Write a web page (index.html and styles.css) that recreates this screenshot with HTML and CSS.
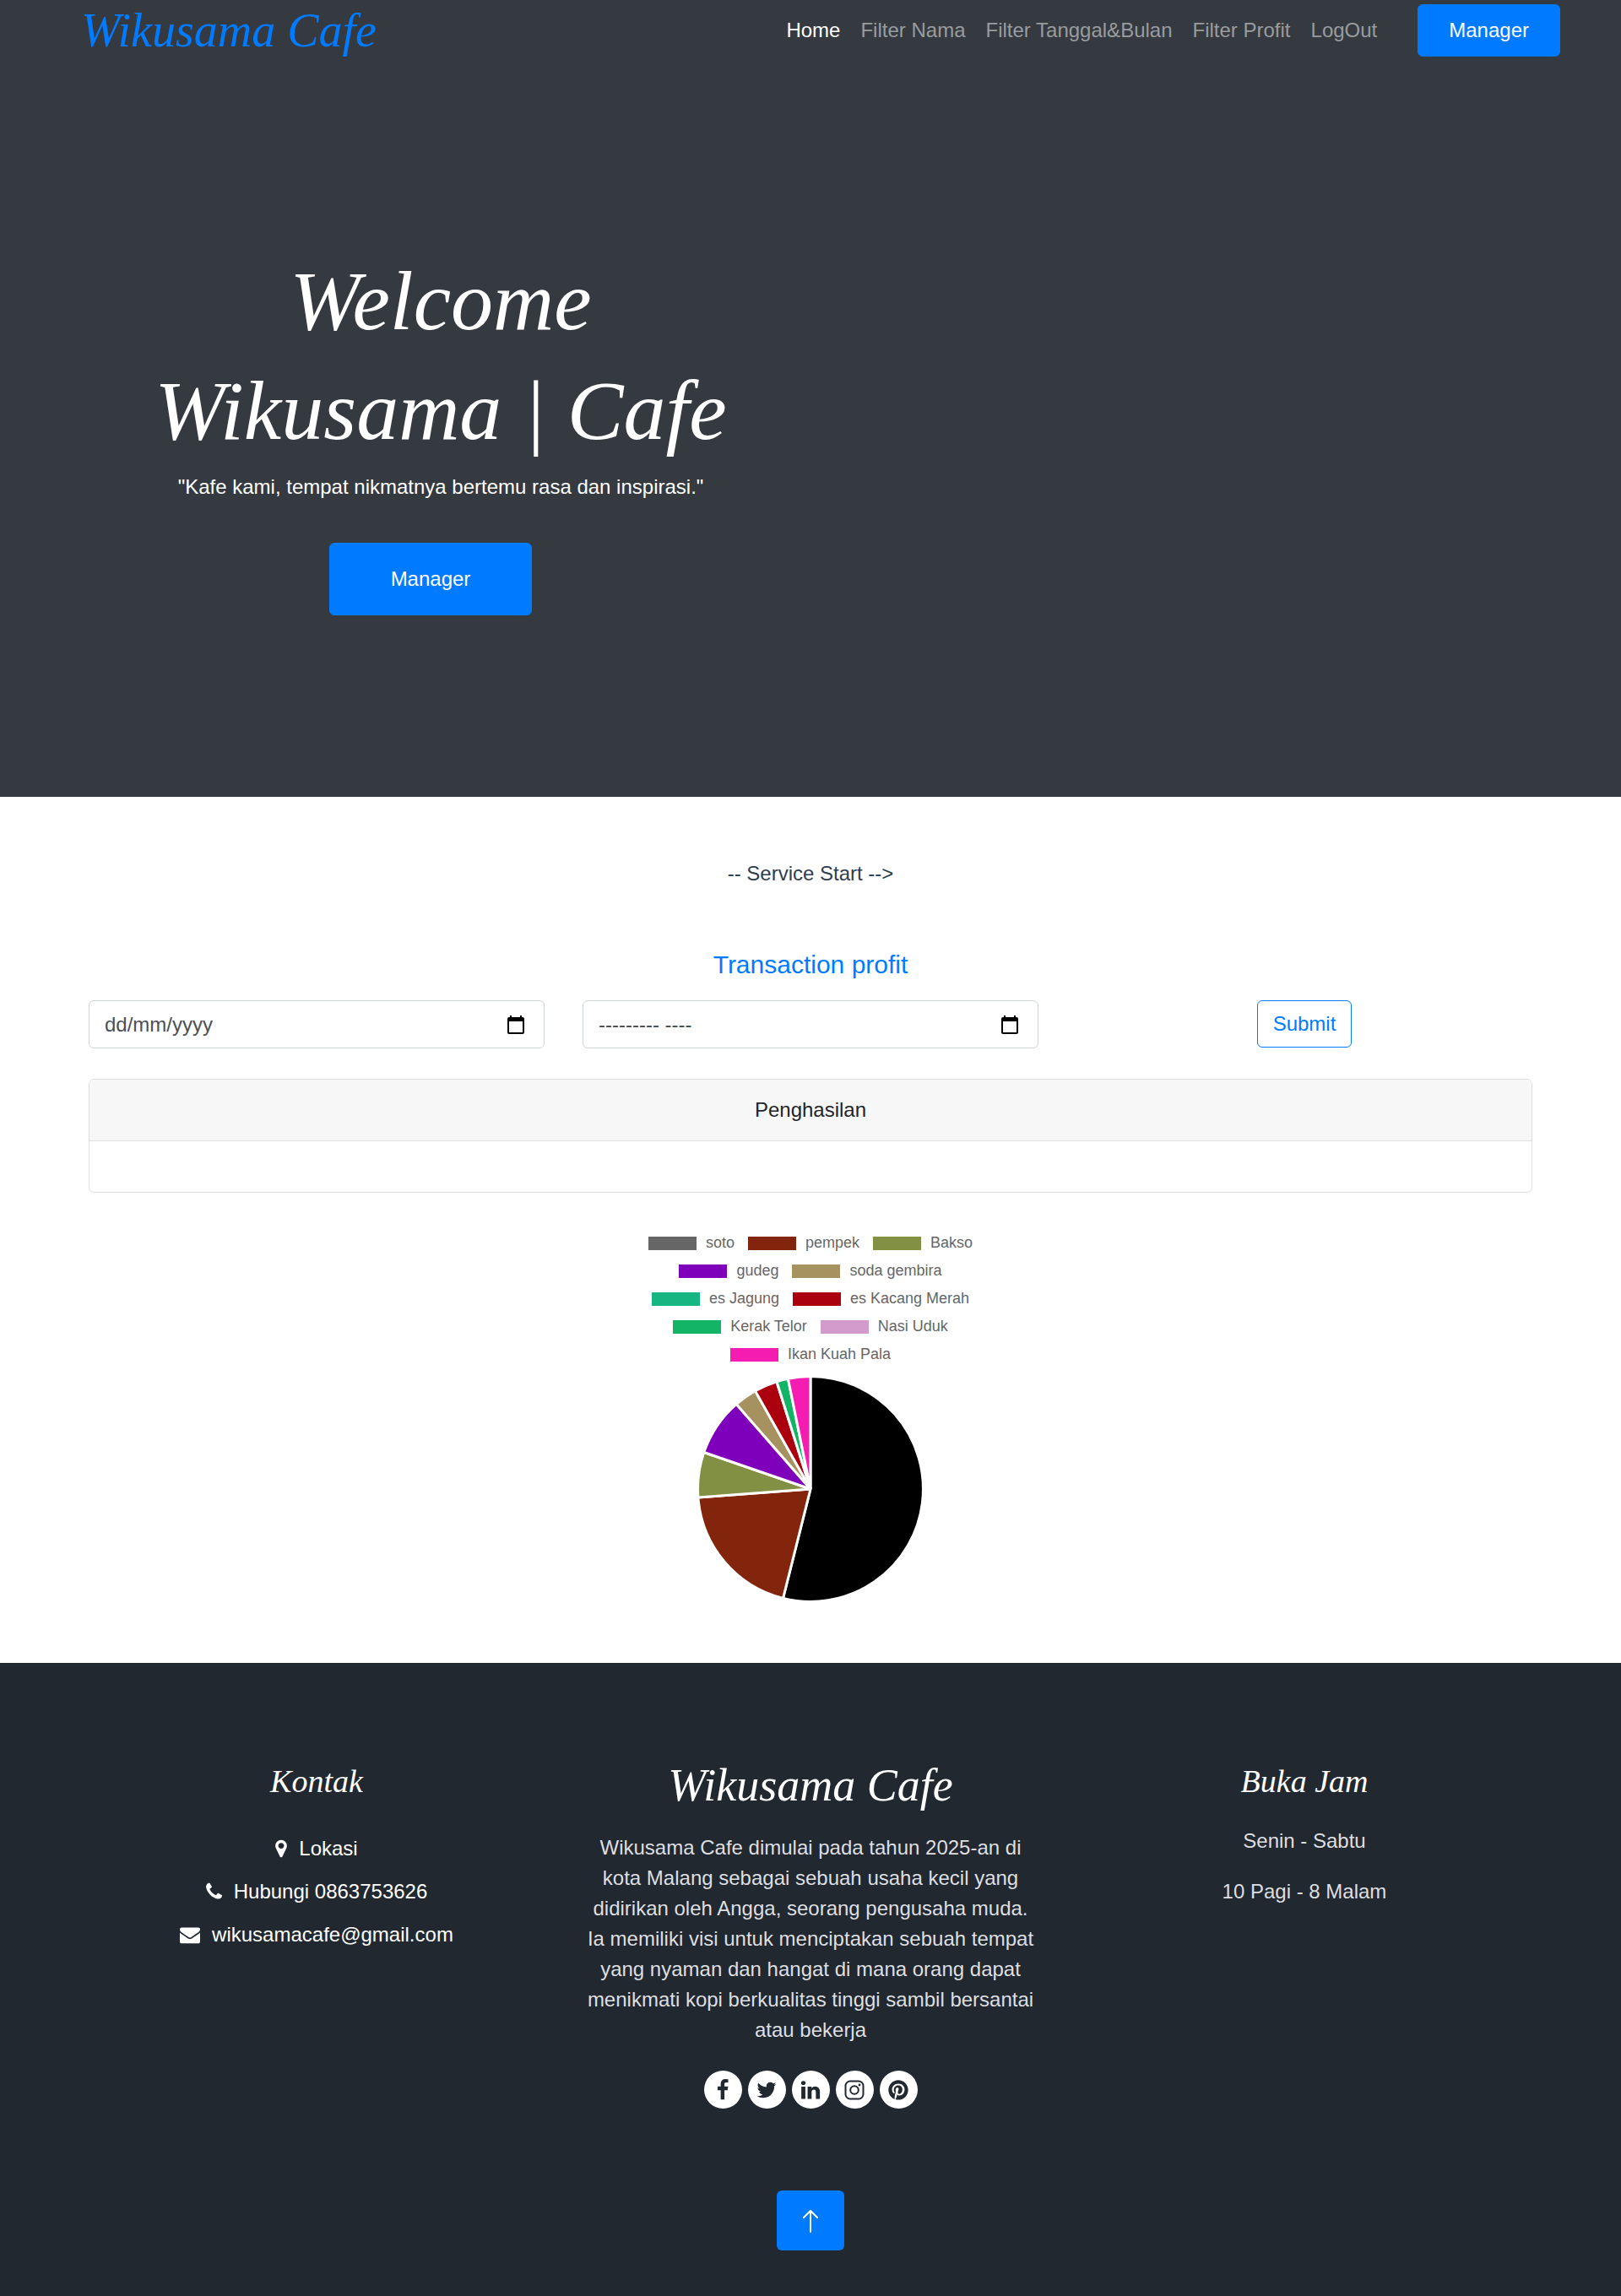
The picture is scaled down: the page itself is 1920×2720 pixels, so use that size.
FILE: index.html
```html
<!DOCTYPE html>
<html lang="id">
<head>
<meta charset="utf-8">
<meta name="viewport" content="width=device-width, initial-scale=1">
<title>Wikusama Cafe</title>
<link rel="stylesheet" href="styles.css">
</head>
<body>
<header class="hero">
  <nav class="navbar">
    <a class="brand" href="#">Wikusama Cafe</a>
    <div class="nav-links">
      <a class="nav-link active" href="#">Home</a>
      <a class="nav-link" href="#">Filter Nama</a>
      <a class="nav-link" href="#">Filter Tanggal&amp;Bulan</a>
      <a class="nav-link" href="#">Filter Profit</a>
      <a class="nav-link" href="#">LogOut</a>
    </div>
    <a class="btn" href="#">Manager</a>
  </nav>
  <div class="hero-text">
    <h1>Welcome<br>Wikusama | Cafe</h1>
    <p>"Kafe kami, tempat nikmatnya bertemu rasa dan inspirasi."</p>
    <a class="btn btn-large" href="#">Manager</a>
  </div>
</header>

<main class="container">
  <p class="service">-- Service Start --&gt;</p>
  <h2>Transaction profit</h2>
  <form class="columns filter">
    <div class="field">
      <input type="text" aria-label="Tanggal" placeholder="dd/mm/yyyy">
      <svg class="calendar" viewBox="0 0 20 22" aria-hidden="true"><path fill-rule="evenodd" d="M3 0h2v2h10V0h2v2h1q2 0 2 2v16q0 2-2 2H2q-2 0-2-2V4q0-2 2-2h1zM2 7v13h16V7z"/></svg>
    </div>
    <div class="field">
      <input type="text" aria-label="Bulan" placeholder="--------- ----">
      <svg class="calendar" viewBox="0 0 20 22" aria-hidden="true"><path fill-rule="evenodd" d="M3 0h2v2h10V0h2v2h1q2 0 2 2v16q0 2-2 2H2q-2 0-2-2V4q0-2 2-2h1zM2 7v13h16V7z"/></svg>
    </div>
    <button class="submit" type="button">Submit</button>
  </form>
  <section class="card">
    <div class="card-header">Penghasilan</div>
    <div class="card-body"></div>
  </section>
  <section class="chart">
    <ul class="legend">
      <li><span class="swatch soto"></span>soto</li>
      <li><span class="swatch pempek"></span>pempek</li>
      <li><span class="swatch bakso"></span>Bakso</li>
      <li><span class="swatch gudeg"></span>gudeg</li>
      <li><span class="swatch soda"></span>soda gembira</li>
      <li><span class="swatch jagung"></span>es Jagung</li>
      <li><span class="swatch kacang"></span>es Kacang Merah</li>
      <li><span class="swatch kerak"></span>Kerak Telor</li>
      <li><span class="swatch nasi"></span>Nasi Uduk</li>
      <li><span class="swatch ikan"></span>Ikan Kuah Pala</li>
    </ul>
    <svg class="pie" viewBox="0 0 270 270" role="img" aria-label="Pie">
      <path fill="#000" d="M135 135V1.5A133.5 133.5 0 1 1 102.5 264.5z"/>
      <path fill="#83240c" d="M135 135L102.5 264.5A133.5 133.5 0 0 1 1.9 145z"/>
      <path fill="#829044" d="M135 135L1.9 145A133.5 133.5 0 0 1 8.8 91.5z"/>
      <path fill="#7f00ba" d="M135 135L8.8 91.5A133.5 133.5 0 0 1 47.2 34.4z"/>
      <path fill="#a69260" d="M135 135L47.2 34.4A133.5 133.5 0 0 1 69.5 18.7z"/>
      <path fill="#ab000e" d="M135 135L69.5 18.7A133.5 133.5 0 0 1 94.9 7.7z"/>
      <path fill="#14b466" d="M135 135L94.9 7.7A133.5 133.5 0 0 1 108.4 4.2z"/>
      <path fill="#f51cb1" d="M135 135L108.4 4.2A133.5 133.5 0 0 1 135 1.5z"/>
    </svg>
  </section>
</main>

<footer class="footer">
  <div class="columns">
    <section>
      <h4>Kontak</h4>
      <div class="contacts">
        <a href="#"><svg class="pin" viewBox="384 0 1024 1792"><path d="M1152 640q0-106-75-181t-181-75-181 75-75 181 75 181 181 75 181-75 75-181zm256 0q0 109-33 179l-364 774q-16 33-47.5 52t-67.5 19-67.5-19-46.5-52l-365-774q-33-70-33-179 0-212 150-362t362-150 362 150 150 362z"/></svg>Lokasi</a>
        <a href="#"><svg class="phone" viewBox="192 0 1408 1792"><path d="M1600 1240q0 27-10 70.5t-21 68.5q-21 50-122 106-94 51-186 51-27 0-53-3.5t-57.5-12.5-47-14.5-55.5-20.5-49-18q-98-35-175-83-127-79-264-216t-216-264q-48-77-83-175-3-9-18-49t-20.5-55.5-14.5-47-12.5-57.5-3.5-53q0-92 51-186 56-101 106-122 25-11 68.5-21t70.5-10q14 0 21 3 18 6 53 76 11 19 30 54t35 63.5 31 53.5q3 4 17.5 25t21.5 35.5 7 28.5q0 20-28.5 50t-62 55-62 53-28.5 46q0 9 5 22.5t8.5 20.5 14 24 11.5 19q76 137 174 235t235 174q2 1 19 11.5t24 14 20.5 8.5 22.5 5q18 0 46-28.5t53-62 55-62 50-28.5q14 0 28.5 7t35.5 21.5 25 17.5q25 15 53.5 31t63.5 35 54 30q70 35 76 53 3 7 3 21z"/></svg>Hubungi 0863753626</a>
        <a href="#"><svg class="mail" viewBox="0 0 1792 1792"><path d="M1792 710v794q0 66-47 113t-113 47h-1472q-66 0-113-47t-47-113v-794q44 49 101 87 362 246 497 345 57 42 92.5 65.5t94.5 48 110 24.5h2q51 0 110-24.5t94.5-48 92.5-65.5q170-123 498-345 57-39 100-87zm0-294q0 79-49 151t-122 123q-376 261-468 325-10 7-42.5 31t-54 38.5-52 32.5-57.5 27-50 9h-2q-23 0-50-9t-57.5-27-52-32.5-54-38.5-42.5-31q-91-64-262-182.5t-205-142.5q-62-42-117-115.5t-55-136.5q0-78 41.5-130t118.5-52h1472q65 0 112.5 47t47.5 113z"/></svg>wikusamacafe@gmail.com</a>
      </div>
    </section>
    <section>
      <h3>Wikusama Cafe</h3>
      <p class="about">Wikusama Cafe dimulai pada tahun 2025-an di kota Malang sebagai sebuah usaha kecil yang didirikan oleh Angga, seorang pengusaha muda. Ia memiliki visi untuk menciptakan sebuah tempat yang nyaman dan hangat di mana orang dapat menikmati kopi berkualitas tinggi sambil bersantai atau bekerja</p>
      <div class="social">
        <a href="#" aria-label="Facebook"><svg viewBox="0 0 1792 1792"><path d="M1343 12v264h-157q-86 0-116 36t-30 108v189h293l-39 296h-254v759h-306v-759h-255v-296h255v-218q0-186 104-288.5t277-102.5q147 0 228 12z"/></svg></a>
        <a href="#" aria-label="Twitter"><svg viewBox="0 0 1792 1792"><path d="M1684 408q-67 98-162 167 1 14 1 42 0 130-38 259.5t-115.5 248.5-184.5 210.5-258 146-323 54.5q-271 0-496-145 35 4 78 4 225 0 401-138-105-2-188-64.5t-114-159.5q33 5 61 5 43 0 85-11-112-23-185.5-111.5t-73.5-205.5v-4q68 38 146 41-66-44-105-115t-39-154q0-88 44-163 121 149 294.5 238.5t371.5 99.5q-8-38-8-74 0-134 94.5-228.5t228.5-94.5q140 0 236 102 109-21 205-78-37 115-142 178 93-10 186-50z"/></svg></a>
        <a href="#" aria-label="LinkedIn"><svg viewBox="0 0 1792 1792"><path d="M477 625v991h-330v-991h330zm21-306q1 73-50.5 122t-135.5 49h-2q-82 0-132-49t-50-122q0-74 51.5-122.5t134.5-48.5 133 48.5 51 122.5zm1166 729v568h-329v-530q0-105-40.5-164.5t-126.5-59.5q-63 0-105.500 34.500t-63.500 85.500q-11 30-11 81v553h-329q2-399 2-647t-1-296l-1-48h329v144h-2q20-32 41-56t56.500-52 87-43.500 114.500-15.500q171 0 275 113.500t104 332.500z"/></svg></a>
        <a href="#" aria-label="Instagram"><svg viewBox="0 0 26 26"><rect x="2.500" y="2.500" width="21" height="21" rx="5.500" fill="none" stroke="#212830" stroke-width="2"/><circle cx="13" cy="13" r="4.800" fill="none" stroke="#212830" stroke-width="2"/><circle cx="19" cy="7" r="1.400"/></svg></a>
        <a href="#" aria-label="Pinterest"><svg viewBox="-28 -18 552 552"><path d="M496 256c0 137-111 248-248 248-25.600 0-50.200-3.900-73.400-11.100 10.100-16.500 25.200-43.500 30.800-65 3-11.600 15.400-59 15.400-59 8.100 15.400 31.700 28.500 56.800 28.500 74.800 0 128.700-68.800 128.700-154.300 0-81.900-66.900-143.200-152.900-143.200-107 0-163.900 71.800-163.900 150.100 0 36.400 19.400 81.700 50.300 96.100 4.700 2.200 7.200 1.200 8.300-3.300.8-3.400 5-20.300 6.900-28.100.6-2.500.3-4.700-1.700-7.100-10.100-12.500-18.300-35.300-18.300-56.600 0-54.700 41.400-107.600 112-107.600 60.900 0 103.600 41.500 103.600 100.900 0 67.100-33.900 113.600-78 113.600-24.300 0-42.600-20.100-36.700-44.800 7-29.500 20.500-61.300 20.500-82.600 0-19-10.200-34.900-31.400-34.900-24.900 0-44.900 25.700-44.900 60.200 0 22 7.400 36.800 7.400 36.800s-24.500 103.800-29 123.200c-5 21.400-3 51.600-.9 71.200C65.400 450.900 0 361.100 0 256 0 119 111 8 248 8s248 111 248 248z"/></svg></a>
      </div>
    </section>
    <section>
      <h4>Buka Jam</h4>
      <div class="hours">
        <p>Senin - Sabtu</p>
        <p>10 Pagi - 8 Malam</p>
      </div>
    </section>
  </div>
  <a class="to-top" href="#" aria-label="Ke atas"><svg viewBox="0 0 20 28" aria-hidden="true"><path d="M10 27V2M2 10l8-8 8 8"/></svg></a>
</footer>
</body>
</html>
```
FILE: styles.css
```css
* { box-sizing: border-box; }

body {
  margin: 0;
  background: #fff;
  color: #212529;
  font: 24px/36px "Liberation Sans", Arial, sans-serif;
}

h1, h2, h3, h4, p, ul { margin: 0; padding: 0; font-weight: 400; }
a { color: inherit; text-decoration: none; }

.brand, h1, h3, h4 {
  font-family: "Liberation Serif", serif;
  font-style: italic;
}

.btn {
  display: inline-block;
  padding: 12px 36px;
  border: 1px solid #007bff;
  border-radius: 6px;
  background: #007bff;
  color: #fff;
}
.btn-large { padding: 24px 72px; margin-right: 24px; }

/* Header */
.hero { background: #353940; color: #fff; padding-bottom: 215px; }
.navbar {
  display: flex;
  align-items: center;
  padding: 5px 72px 5px 96px;
}
.brand { font-size: 56px; line-height: 62px; color: #007bff; }
.nav-links { display: flex; gap: 24px; margin-left: auto; margin-right: 48px; }
.nav-link { color: #999c9f; }
.nav-link.active { color: #fff; }

.hero-text {
  width: 50%;
  padding: 220px 0 0 84px;
  text-align: center;
}
.hero-text h1 { font-size: 100px; line-height: 130px; }
.hero-text p { margin: 7px 0 48px; }
.hero-text .btn { vertical-align: top; }

/* Profit filter */
.container { padding: 73px 105px 71px; text-align: center; }
.service { color: #2c3e50; }
h2 { margin: 72px 0 24px; font-size: 30px; line-height: 36px; color: #007bff; }

.columns {
  display: grid;
  grid-template-columns: repeat(3, 1fr);
  column-gap: 45px;
}
.field { position: relative; }
.field input {
  display: block;
  width: 100%;
  height: 57px;
  padding: 0 60px 0 18px;
  border: 1px solid #ced4da;
  border-radius: 6px;
  background: #fff;
  font: inherit;
  color: #495057;
}
.field input::placeholder { color: #495057; opacity: 1; }
.calendar { position: absolute; right: 24px; top: 18px; width: 20px; height: 22px; }
.submit {
  justify-self: center;
  height: 56px;
  padding: 0 18px;
  border: 1px solid #007bff;
  border-radius: 6px;
  background: #fff;
  color: #007bff;
  font: inherit;
}

.card { margin-top: 36px; border: 1px solid #dfdfdf; border-radius: 6px; overflow: hidden; }
.card-header { padding: 18px; border-bottom: 1px solid #dfdfdf; background: #f7f7f7; }
.card-body { height: 60px; }

/* Chart */
.chart { display: flex; flex-direction: column; align-items: center; gap: 8px; margin-top: 43px; }
.legend {
  display: flex;
  flex-wrap: wrap;
  justify-content: center;
  column-gap: 16px;
  max-width: 420px;
  list-style: none;
  font-size: 18px;
  line-height: 33px;
  color: #666;
}
.legend li { display: flex; align-items: center; gap: 11px; }
.swatch { width: 57px; height: 16px; }
.soto { background: #666; }
.pempek { background: #83240c; }
.bakso { background: #829044; }
.gudeg { background: #7f00ba; }
.soda { background: #a69260; }
.jagung { background: #17b582; }
.kacang { background: #ab000e; }
.kerak { background: #14b466; }
.nasi { background: #d29bcb; }
.ikan { background: #f51cb1; }
.pie { width: 270px; height: 270px; }
.pie path { stroke: #fff; stroke-width: 3; stroke-linejoin: bevel; }

/* Footer */
.footer {
  padding: 118px 105px 54px;
  background: #212830;
  color: #fff;
  text-align: center;
}
.footer svg { fill: currentColor; }
h3 { font-size: 54px; line-height: 54px; margin-bottom: 29px; }
h4 { font-size: 38px; line-height: 44px; }
.contacts { display: flex; flex-direction: column; align-items: center; gap: 15px; margin-top: 40px; }
.contacts a { display: flex; align-items: center; gap: 14px; }
.contacts svg { height: 24px; }
.pin { width: 14px; }
.phone { width: 19px; }
.mail { width: 24px; }
.about, .hours { color: #dedfe0; }
.hours { display: grid; gap: 24px; margin-top: 31px; }
.social { display: flex; justify-content: center; gap: 7px; margin-top: 30px; }
.social a {
  display: flex;
  align-items: center;
  justify-content: center;
  width: 45px;
  height: 45px;
  border-radius: 50%;
  background: #fff;
  color: #212830;
}
.social svg { width: 26px; height: 26px; }
.to-top {
  display: flex;
  align-items: center;
  justify-content: center;
  width: 80px;
  height: 71px;
  margin: 97px auto 0;
  border-radius: 6px;
  background: #007bff;
}
.to-top svg { width: 20px; height: 28px; fill: none; stroke: #fff; stroke-width: 2; stroke-linecap: round; stroke-linejoin: round; }
```
